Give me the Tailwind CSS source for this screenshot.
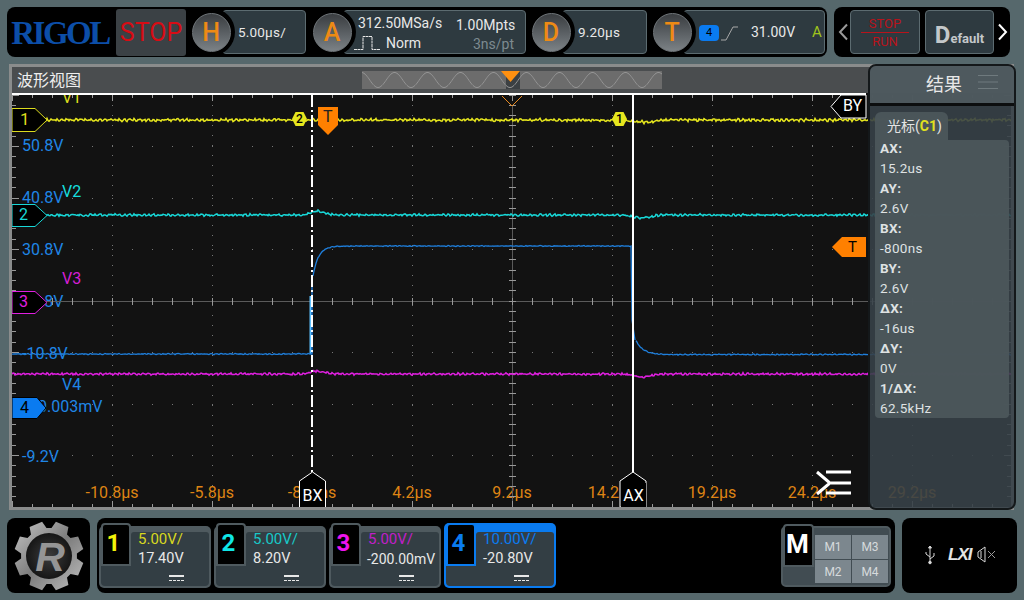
<!DOCTYPE html>
<html><head><meta charset="utf-8"><script src="https://cdn.jsdelivr.net/npm/@tailwindcss/browser@4"></script></head>
<body class="m-0">
<div class="relative w-[1024px] h-[600px] overflow-hidden bg-[#56686c] pt-[7px] font-['Roboto','Noto_Sans_CJK_SC',sans-serif] text-[#e8e8e8]">

<!-- top bar -->
<div class="flex gap-[7px] pl-[7px] h-[50px]">
  <div class="w-[820px] h-[50px] bg-black rounded-[8px] flex items-center">
    <div class="ml-[3px] w-[100px] text-center text-[#0c4ea8] font-['Liberation_Serif',serif] font-bold text-[33px] tracking-[-2.500px] leading-none scale-y-[1.05]">RIGOL</div>
    <div class="ml-[6px] w-[70px] h-[47px] bg-[#3b4145] rounded-[3px] flex items-center justify-center text-[#d80c14] text-[25px] leading-none">STOP</div>

    <div class="relative z-10 ml-[1px] w-[48px] h-[48px] rounded-full bg-black flex items-center justify-center"><div class="w-[39px] h-[39px] rounded-full bg-gradient-to-b from-[#3a3d40] via-[#5a5f63] to-[#7c8286] border border-[#70767a] flex items-center justify-center text-[#ee8a14] text-[25px] leading-none font-medium">H</div></div>
    <div class="-ml-[13px] w-[84px] h-[44px] bg-[#2e3a40] border border-[#5c6b70] rounded-[4px] flex items-center pl-[15px] text-[13.500px] tracking-[0.2px]">5.00μs/</div>

    <div class="relative z-10 ml-[2px] w-[48px] h-[48px] rounded-full bg-black flex items-center justify-center"><div class="w-[39px] h-[39px] rounded-full bg-gradient-to-b from-[#3a3d40] via-[#5a5f63] to-[#7c8286] border border-[#70767a] flex items-center justify-center text-[#ee8a14] text-[25px] leading-none font-medium">A</div></div>
    <div class="-ml-[13px] w-[183px] h-[44px] bg-[#2e3a40] border border-[#5c6b70] rounded-[4px] relative text-[14px] leading-[16px]">
      <span class="absolute left-[14px] top-[4px]">312.50MSa/s</span>
      <span class="absolute left-[112px] top-[6px]">1.00Mpts</span>
      <svg class="absolute left-[9px] top-[24px]" width="28" height="16" viewBox="0 0 28 16" fill="none" stroke="#e8e8e8" stroke-width="1" stroke-dasharray="3 0.500"><path d="M1 14.500h9V1.500h9v13h8" /></svg>
      <span class="absolute left-[42px] top-[24px]">Norm</span>
      <span class="absolute left-[129px] top-[25px] text-[#7d8a90]">3ns/pt</span>
    </div>

    <div class="relative z-10 ml-[1px] w-[48px] h-[48px] rounded-full bg-black flex items-center justify-center"><div class="w-[39px] h-[39px] rounded-full bg-gradient-to-b from-[#3a3d40] via-[#5a5f63] to-[#7c8286] border border-[#70767a] flex items-center justify-center text-[#ee8a14] text-[25px] leading-none font-medium">D</div></div>
    <div class="-ml-[13px] w-[85px] h-[44px] bg-[#2e3a40] border border-[#5c6b70] rounded-[4px] flex items-center pl-[15px] text-[13.500px] tracking-[0.2px]">9.20μs</div>

    <div class="relative z-10 ml-[1px] w-[48px] h-[48px] rounded-full bg-black flex items-center justify-center"><div class="w-[39px] h-[39px] rounded-full bg-gradient-to-b from-[#3a3d40] via-[#5a5f63] to-[#7c8286] border border-[#70767a] flex items-center justify-center text-[#ee8a14] text-[25px] leading-none font-medium">T</div></div>
    <div class="-ml-[13px] w-[142px] h-[44px] bg-[#2e3a40] border border-[#5c6b70] rounded-[4px] relative text-[13px]">
      <span class="absolute left-[15px] top-[14px] w-[20px] h-[16px] rounded-[4px] bg-[#0a7bf0] text-black text-[11px] leading-[16px] text-center">4</span>
      <svg class="absolute left-[37px] top-[13px]" width="18" height="18" viewBox="0 0 18 18" fill="none" stroke="#a8a8a8" stroke-width="1"><path d="M0 16h5L12 3h5"/></svg>
      <span class="absolute left-[67px] top-[12px] text-[14px] leading-[18px]">31.00V</span>
      <span class="absolute left-[128px] top-[12px] text-[15px] leading-[18px] text-[#9fc31c]">A</span>
    </div>
  </div>

  <div class="w-[176px] h-[50px] bg-black rounded-[8px] flex items-center">
    <svg class="ml-[3px]" width="13" height="18" viewBox="0 0 13 18" fill="none" stroke="#9a9a9a" stroke-width="2"><path d="M10 1.500L3 9l7 7.500"/></svg>
    <div class="w-[70px] h-[44px] bg-[#2e3a40] border border-[#5c6b70] rounded-[4px] flex flex-col items-center justify-center text-[#b8131b] text-[13px] leading-[13px]">
      <span>STOP</span><span class="w-[48px] h-px bg-[#b8131b] my-[2px]"></span><span>RUN</span>
    </div>
    <div class="ml-[5px] w-[69px] h-[44px] bg-[#2e3a40] border border-[#5c6b70] rounded-[4px] flex items-end justify-center pb-[8px] text-[#c4c8ca] font-bold text-[13px] leading-none"><span class="text-[24px] leading-[20px] font-bold">D</span>efault</div>
    <svg class="ml-[2px]" width="13" height="18" viewBox="0 0 13 18" fill="none" stroke="#ffffff" stroke-width="2"><path d="M3 1.500L10 9l-7 7.500"/></svg>
  </div>
</div>

<!-- waveform window -->
<div class="mt-[7px] ml-[9px] w-[1005px] h-[446px] border-[3px] border-[#8a8c8c] bg-[#4a4d4f]">
  <div class="relative h-[26px]">
    <span class="absolute left-[5px] top-[2px] text-[16px] leading-[24px] text-[#eeeeee]">波形视图</span>
    <svg class="absolute left-[350px] top-[4px]" width="300" height="18" viewBox="0 0 300 18">
      <rect width="300" height="18" fill="#6c6c6c"/>
      <rect x="144" y="0" width="14" height="18" fill="#3c4043"/>
      <path id="tape" fill="none" stroke="#949494" stroke-width="1"/>
      <path d="M139 0h19l-9.500 11z" fill="#ff9010"/>
    </svg>
  </div>
  <div class="relative w-[999px] h-[414px] bg-[#121212] overflow-hidden">
    <!-- axis labels -->
    <span class="absolute left-[50px] top-[-3px] text-[16px] leading-[16px] text-[#dcdc1e]">V1</span>
    <span class="absolute left-[10px] top-[45px] text-[16px] leading-[16px] text-[#1f86e6]">50.8V</span>
    <span class="absolute left-[10px] top-[97px] text-[16px] leading-[16px] text-[#1f86e6]">40.8V</span>
    <span class="absolute left-[50px] top-[91px] text-[16px] leading-[16px] text-[#16dede]">V2</span>
    <span class="absolute left-[10px] top-[149px] text-[16px] leading-[16px] text-[#1f86e6]">30.8V</span>
    <span class="absolute left-[50px] top-[178px] text-[16px] leading-[16px] text-[#d61fd6]">V3</span>
    <span class="absolute left-[10px] top-[201px] text-[16px] leading-[16px] text-[#1f86e6]">20.8V</span>
    <span class="absolute left-[10px] top-[253px] text-[16px] leading-[16px] text-[#1f86e6]">-10.8V</span>
    <span class="absolute left-[50px] top-[284px] text-[16px] leading-[16px] text-[#1f86e6]">V4</span>
    <span class="absolute left-[26px] top-[306px] text-[16px] leading-[16px] text-[#1f86e6]">0.003mV</span>
    <span class="absolute left-[10px] top-[356px] text-[16px] leading-[16px] text-[#1f86e6]">-9.2V</span>

    <span class="absolute left-[60px] top-[392px] w-[80px] text-center text-[16px] leading-[16px] text-[#de8414]">-10.8μs</span>
    <span class="absolute left-[160px] top-[392px] w-[80px] text-center text-[16px] leading-[16px] text-[#de8414]">-5.8μs</span>
    <span class="absolute left-[260px] top-[392px] w-[80px] text-center text-[16px] leading-[16px] text-[#de8414]">-800ns</span>
    <span class="absolute left-[360px] top-[392px] w-[80px] text-center text-[16px] leading-[16px] text-[#de8414]">4.2μs</span>
    <span class="absolute left-[460px] top-[392px] w-[80px] text-center text-[16px] leading-[16px] text-[#de8414]">9.2μs</span>
    <span class="absolute left-[560px] top-[392px] w-[80px] text-center text-[16px] leading-[16px] text-[#de8414]">14.2μs</span>
    <span class="absolute left-[660px] top-[392px] w-[80px] text-center text-[16px] leading-[16px] text-[#de8414]">19.2μs</span>
    <span class="absolute left-[760px] top-[392px] w-[80px] text-center text-[16px] leading-[16px] text-[#de8414]">24.2μs</span>
    <span class="absolute left-[860px] top-[392px] w-[80px] text-center text-[16px] leading-[16px] text-[#de8414]">29.2μs</span>

    <svg id="plot" class="absolute left-0 top-0" width="999" height="414" viewBox="12 93 999 414" fill="none">
      <g id="grid"></g>
      <path d="M310.500 296V354" stroke="#5cc0ff" stroke-width="2"/>
      <path id="c4" stroke="#1f7fdc" stroke-width="1.300"/>
      <path id="c3" stroke="#e01fe0" stroke-width="1.500"/>
      <path id="c2" stroke="#18d8d8" stroke-width="1.500"/>
      <path id="c1" stroke="#e6e61e" stroke-width="1.500"/>
      <path d="M12 94h854" stroke="#ffffff" stroke-width="2"/>
      <path d="M312 95V478" stroke="#ffffff" stroke-width="2" stroke-dasharray="12 3 2 3"/>
      <path d="M633 95V478" stroke="#ffffff" stroke-width="2"/>
      <path d="M502 96l10 10 10-10" stroke="#e88a20" stroke-width="1"/>
      <!-- channel markers -->
      <path d="M12 108.500h23l12 11.500-12 11.500H12z" fill="#000" stroke="#dcdc1e"/>
      <path d="M12 204.500h23l12 11-12 11H12z" fill="#000" stroke="#18d8d8"/>
      <path d="M12 291.500h23l12 11-12 11H12z" fill="#000" stroke="#e01fe0"/>
      <path d="M12 397.500h25l9 10.500-9 10.500H12z" fill="#0a7bf0" stroke="#000"/>
      <path d="M866 237h-24l-10 10 10 10h24z" fill="#ff8000"/>
      <path d="M318 107h20v18l-10 10-10-10z" fill="#ff8000"/>
      <path d="M292 119l3.500-7h8l3.500 7-3.500 7h-8z" fill="#e6e61e"/>
      <path d="M612 119l3.500-7h8l3.500 7-3.500 7h-8z" fill="#e6e61e"/>
      <!-- cursor tags -->
      <path d="M866 95v23h-25l-10-11.500 10-11.500z" fill="#000" stroke="#fff"/>
      <path d="M299.500 507v-26l13-9 13 9v26z" fill="#000" stroke="#fff"/>
      <path d="M620 507v-26l13-9 13 9v26z" fill="#000" stroke="#fff"/>
    </svg>

    <span class="absolute left-[8px] top-[17px] text-[17px] leading-[18px] text-[#dcdc1e]">1</span>
    <span class="absolute left-[7px] top-[113px] text-[16px] leading-[18px] text-[#18d8d8]">2</span>
    <span class="absolute left-[7px] top-[200px] text-[16px] leading-[18px] text-[#e01fe0]">3</span>
    <span class="absolute left-[8px] top-[306px] text-[16px] leading-[18px] text-black">4</span>
    <span class="absolute left-[836px] top-[145px] text-[15px] leading-[18px] text-black">T</span>
    <span class="absolute left-[311px] top-[15px] text-[16px] leading-[18px] text-[#222]">T</span>
    <span class="absolute left-[283px] top-[18px] w-[9px] text-center text-[12px] leading-[16px] text-black font-medium">2</span>
    <span class="absolute left-[603px] top-[18px] w-[9px] text-center text-[12px] leading-[16px] text-black font-medium">1</span>
    <span class="absolute left-[831px] top-[4px] text-[16px] leading-[18px] text-white">BY</span>

    <!-- tags over time labels -->
    <div class="absolute left-[288px] top-[390px] w-[25px] h-[24px] bg-black text-white text-[16px] leading-[26px] text-center">BX</div>
    <div class="absolute left-[609px] top-[390px] w-[25px] h-[24px] bg-black text-white text-[16px] leading-[26px] text-center">AX</div>
    <svg class="absolute left-[804px] top-[377px]" width="36" height="26" viewBox="816 470 36 26" fill="none"><path d="M817 472l13 11-13 11" stroke="#fff" stroke-width="3"/><path d="M826 472h25M831 483h20M826 493h25" stroke="#fff" stroke-width="3"/></svg>
  </div>
</div>

<!-- result panel overlay -->
<div class="absolute left-[868px] top-[64px] w-[148px] h-[446px] border-[2px] border-[#14181a] rounded-[8px] bg-[#374148]/90 overflow-hidden">
  <div class="relative h-[37px] bg-[#525d61]/85 border-b-[3px] border-[#0c0e0f] box-content flex items-center justify-center pl-[4px] text-[18px] leading-[24px] text-[#e8e8e8]">
    结果
    <svg class="absolute left-[108px] top-[8px]" width="20" height="16" fill="none" stroke="#6f7a7e" stroke-width="1"><path d="M0 1.500h20M0 8h20M0 14.500h20"/></svg>
  </div>
  <div class="ml-[5px] mt-[6px] w-[73px] h-[28px] rounded-t-[6px] bg-[#4c565b]/95 pl-[12px] text-[14px] leading-[28px] text-[#e4e4e4]">光标(<b class="text-[#e0e020] font-bold">C1</b>)</div>
  <div class="ml-[5px] w-[134px] h-[278px] rounded-b-[4px] rounded-tr-[4px] bg-[#4c565b]/95 pl-[5px] text-[13.500px] leading-[20px] text-[#dfe2e3] tracking-[0.3px]">
    <div class="-translate-y-[2px]">
    <div class="font-bold">AX:</div><div>15.2us</div>
    <div class="font-bold">AY:</div><div>2.6V</div>
    <div class="font-bold">BX:</div><div>-800ns</div>
    <div class="font-bold">BY:</div><div>2.6V</div>
    <div class="font-bold">ΔX:</div><div>-16us</div>
    <div class="font-bold">ΔY:</div><div>0V</div>
    <div class="font-bold">1/ΔX:</div><div>62.5kHz</div>
    </div>
  </div>
</div>

<!-- bottom -->
<div class="mt-[8px] pl-[7px] flex gap-[7px] h-[75px]">
  <div class="w-[83px] h-[75px] bg-black rounded-[8px] flex items-center justify-center">
    <svg width="72" height="72" viewBox="-36 -36 72 72">
      <defs>
        <linearGradient id="sv" x1="0" y1="0" x2="1" y2="1"><stop offset="0" stop-color="#c4c4c4"/><stop offset=".5" stop-color="#7c7c7c"/><stop offset="1" stop-color="#c0c0c0"/></linearGradient>
        <radialGradient id="dk"><stop offset="0" stop-color="#3c3c3c"/><stop offset="1" stop-color="#161616"/></radialGradient>
      </defs>
      <path id="gear" fill="url(#sv)"/>
      <circle r="23" fill="url(#dk)"/>
      <text x="1" y="15" text-anchor="middle" font-family="Liberation Sans" font-style="italic" font-weight="bold" font-size="41" fill="#959595">R</text>
    </svg>
  </div>
  <div class="w-[798px] h-[75px] bg-black rounded-[8px] relative flex pl-[2px] gap-[3px] pt-[8px]">
    <!-- ch1 -->
    <div class="relative w-[112px] h-[62px] rounded-[5px] bg-[#4f5a5f]">
      <div class="absolute left-[32px] top-[6px] w-[78px] h-[36px] rounded-[3px] bg-[#333e44]"></div>
      <div class="absolute left-[2px] top-[34px] w-[108px] h-[26px] rounded-b-[4px] bg-[#333e44]"></div>
      <div class="absolute left-[2px] top-[-3px] w-[30px] h-[43px] bg-black border-[2px] border-[#4f5a5f] rounded-t-[4px] flex items-center justify-center pr-[5px] pb-[4px] text-[#f2f20a] text-[24px] font-bold leading-none">1</div>
      <span class="absolute left-[39px] top-[5px] text-[15px] leading-[16px] text-[#d8d820]">5.00V/</span>
      <span class="absolute left-[39px] top-[25px] text-[14.500px] leading-[16px] text-[#e8e8e8]">17.40V</span>
      <div class="absolute left-[70px] top-[49px] w-[15px]"><div class="h-[1.500px] bg-[#e8e8e8]"></div><div class="mt-[3px] border-t-[1.500px] border-dashed border-[#e8e8e8]"></div></div>
    </div>
    <!-- ch2 -->
    <div class="relative w-[112px] h-[62px] rounded-[5px] bg-[#4f5a5f]">
      <div class="absolute left-[32px] top-[6px] w-[78px] h-[36px] rounded-[3px] bg-[#333e44]"></div>
      <div class="absolute left-[2px] top-[34px] w-[108px] h-[26px] rounded-b-[4px] bg-[#333e44]"></div>
      <div class="absolute left-[2px] top-[-3px] w-[30px] h-[43px] bg-black border-[2px] border-[#4f5a5f] rounded-t-[4px] flex items-center justify-center pr-[5px] pb-[4px] text-[#10e6e6] text-[24px] font-bold leading-none">2</div>
      <span class="absolute left-[39px] top-[5px] text-[15px] leading-[16px] text-[#18c8c8]">5.00V/</span>
      <span class="absolute left-[39px] top-[25px] text-[14.500px] leading-[16px] text-[#e8e8e8]">8.20V</span>
      <div class="absolute left-[70px] top-[49px] w-[15px]"><div class="h-[1.500px] bg-[#e8e8e8]"></div><div class="mt-[3px] border-t-[1.500px] border-dashed border-[#e8e8e8]"></div></div>
    </div>
    <!-- ch3 -->
    <div class="relative w-[112px] h-[62px] rounded-[5px] bg-[#4f5a5f]">
      <div class="absolute left-[32px] top-[6px] w-[78px] h-[36px] rounded-[3px] bg-[#333e44]"></div>
      <div class="absolute left-[2px] top-[34px] w-[108px] h-[26px] rounded-b-[4px] bg-[#333e44]"></div>
      <div class="absolute left-[2px] top-[-3px] w-[30px] h-[43px] bg-black border-[2px] border-[#4f5a5f] rounded-t-[4px] flex items-center justify-center pr-[5px] pb-[4px] text-[#ee14ee] text-[24px] font-bold leading-none">3</div>
      <span class="absolute left-[39px] top-[5px] text-[15px] leading-[16px] text-[#c020c8]">5.00V/</span>
      <span class="absolute left-[38px] top-[25px] text-[14px] leading-[16px] text-[#e8e8e8]">-200.00mV</span>
      <div class="absolute left-[70px] top-[49px] w-[15px]"><div class="h-[1.500px] bg-[#e8e8e8]"></div><div class="mt-[3px] border-t-[1.500px] border-dashed border-[#e8e8e8]"></div></div>
    </div>
    <!-- ch4 -->
    <div class="relative w-[112px] h-[65px] -mt-[3px] rounded-[5px] bg-[#0a7bf0]">
      <div class="absolute left-[32px] top-[9px] w-[78px] h-[36px] rounded-[3px] bg-[#333e44]"></div>
      <div class="absolute left-[2px] top-[37px] w-[108px] h-[26px] rounded-b-[4px] bg-[#333e44]"></div>
      <div class="absolute left-[2px] top-[0px] w-[30px] h-[43px] bg-black border-[2px] border-[#0a7bf0] rounded-t-[4px] flex items-center justify-center pr-[5px] pb-[4px] text-[#0a7bf0] text-[24px] font-bold leading-none">4</div>
      <span class="absolute left-[39px] top-[8px] text-[15px] leading-[16px] text-[#0a7bf0]">10.00V/</span>
      <span class="absolute left-[39px] top-[28px] text-[14.500px] leading-[16px] text-[#e8e8e8]">-20.80V</span>
      <div class="absolute left-[70px] top-[52px] w-[15px]"><div class="h-[1.500px] bg-[#e8e8e8]"></div><div class="mt-[3px] border-t-[1.500px] border-dashed border-[#e8e8e8]"></div></div>
    </div>
    <!-- M -->
    <div class="absolute left-[684px] top-[8px] w-[110px] h-[61px] rounded-[5px] bg-[#414c52] border-[2px] border-[#4f5a5f]">
      <div class="absolute left-[0px] top-[-4px] w-[31px] h-[43px] bg-black border-[2px] border-[#4f5a5f] rounded-t-[4px] flex items-center justify-center pr-[2px] pb-[4px] text-white text-[26px] font-bold leading-none">M</div>
      <div class="absolute left-[32px] top-[7px] grid grid-cols-[36px_36px] grid-rows-[24px_23px] gap-[1px] text-[12px] text-[#d6dadc]">
        <div class="bg-[#7c878e] flex items-center justify-center">M1</div><div class="bg-[#7c878e] flex items-center justify-center">M3</div>
        <div class="bg-[#7c878e] flex items-center justify-center">M2</div><div class="bg-[#7c878e] flex items-center justify-center">M4</div>
      </div>
    </div>
  </div>
  <div class="w-[115px] h-[75px] bg-black rounded-[8px] relative">
    <svg class="absolute left-[22px] top-[27px]" width="12" height="20" viewBox="0 0 12 20" fill="none" stroke="#d8d8d8" stroke-width="1"><path d="M6 1v16M6 12L2 9V7M6 14l4-3V8"/><circle cx="6" cy="17.500" r="1.300" fill="#d8d8d8"/><path d="M4.500 3L6 1l1.500 2z" fill="#d8d8d8"/></svg>
    <span class="absolute left-[46px] top-[28px] italic font-bold text-[17px] leading-[18px] text-[#e4e4e4] font-['Liberation_Sans',sans-serif] tracking-[-1px]">LXI</span>
    <svg class="absolute left-[75px] top-[28px]" width="20" height="17" viewBox="0 0 20 17" fill="none" stroke="#d8d8d8" stroke-width="1"><path d="M1 6v5l7 5V1z"/><path d="M4 5v7"/><path d="M11 5l7 7M18 5l-7 7" stroke="#999"/></svg>
  </div>
</div>
</div>
<script>
(function(){
 var s=12345;function r(){s=(s*16807)%2147483647;return s/2147483647-.5}
 function wave(f,a,x0,x1){var d='';for(var x=x0;x<=x1;x+=1){var y=f(x)+r()*a+Math.sin(x*1.3)*a*.35;d+=(d?'L':'M')+x+' '+y.toFixed(1)}return d}
 function g(x,c,w){return Math.exp(-((x-c)*(x-c))/(2*w*w))}
 document.getElementById('c1').setAttribute('d',wave(function(x){return 120+2*g(x,645,10)},2,12,1011));
 document.getElementById('c2').setAttribute('d',wave(function(x){return 215-4*g(x,318,6)+3*g(x,642,8)},1.600,12,1011));
 document.getElementById('c3').setAttribute('d',wave(function(x){return 374-3*g(x,318,7)+3*g(x,642,8)},1.500,12,1011));
 document.getElementById('c4').setAttribute('d',wave(function(){return 354},.8,12,311)
   +'L312 354L312 282'+wave(function(x){return 246+36*Math.exp(-(x-312)/5.500)},.6,313,630)
   +'L631 246L632 320L635 340'+wave(function(x){return 354.500-14*Math.exp(-(x-636)/7)},.8,636,1011));
 var t='';for(var i=0;i<=300;i+=1){var y=9+7.500*Math.cos((i-16)*2*Math.PI/33);t+=(t?'L':'M')+i+' '+y.toFixed(1)}
 document.getElementById('tape').setAttribute('d',t);
 var NS='http://www.w3.org/2000/svg',G=document.getElementById('grid');
 function line(x1,y1,x2,y2,c,da){var l=document.createElementNS(NS,'line');l.setAttribute('x1',x1);l.setAttribute('y1',y1);l.setAttribute('x2',x2);l.setAttribute('y2',y2);l.setAttribute('stroke',c);if(da)l.setAttribute('stroke-dasharray',da);G.appendChild(l)}
 for(var x=112;x<=1012;x+=100){if(x!=512)line(x+.5,95,x+.5,507,'#777','1 9')}
 var ys=[146.5,198,249.5,352.5,404,455.5];ys.forEach(function(y){line(12,Math.floor(y)+.5,1011,Math.floor(y)+.5,'#777','1 19')});
 line(12,301.5,1011,301.5,'#5a5a5a');line(512.5,106,512.5,507,'#5a5a5a');
 for(var x=12;x<=1012;x+=20){var m=(x-12)%100==0;line(x+.5,95,x+.5,m?101:98,'#999');line(x+.5,m?501:504,x+.5,507,'#999');line(x+.5,298,x+.5,305,'#999')}
 for(var k=0;k<=40;k++){var y=Math.floor(95+k*10.3)+.5;var m=k%5==0;line(12,y,m?19:16,y,'#999');line(m?1004:1007,y,1011,y,'#999');line(509,y,516,y,'#999')}
 var d='';for(var a=0;a<8;a++){var c=a*Math.PI/4-Math.PI/8,w=Math.PI/8*.62;
  var P=function(R,t){return (R*Math.cos(t)).toFixed(1)+' '+(R*Math.sin(t)).toFixed(1)};
  d+=(a?'L':'M')+P(28,c-w*1.25)+'L'+P(35,c-w*.8)+'L'+P(35,c+w*.8)+'L'+P(28,c+w*1.25)}
 document.getElementById('gear').setAttribute('d',d+'Z');
})();
</script>
</body></html>
